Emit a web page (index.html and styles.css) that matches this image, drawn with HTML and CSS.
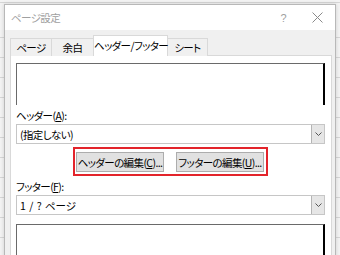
FILE: index.html
```html
<!DOCTYPE html>
<html lang="ja">
<head>
    <meta charset="UTF-8">
    <title>ページ設定</title>
    <link rel="stylesheet" href="styles.css">
</head>
<body>

    <div class="dialog">
        <div class="titlebar">
            <span class="title">ページ設定</span>
            <span class="help">?</span>
            <span class="close">
                <svg width="11" height="11" viewBox="0 0 11 11">
                    <path d="M0.5 0.5 L10.5 10.5 M10.5 0.5 L0.5 10.5" stroke="#8a8a8a" stroke-width="1" fill="none"/>
                </svg>
            </span>
        </div>
        <div class="content">
            <div class="tabs">
                <div class="tab">ページ</div>
                <div class="tab">余白</div>
                <div class="tab active">ヘッダー/フッター</div>
                <div class="tab">シート</div>
            </div>
            <div class="panel">
                <div class="preview"></div>
                <div class="field-label">ヘッダー(<u>A</u>):</div>
                <div class="select">
                    <span class="value">(指定しない)</span>
                    <span class="arrow">
                        <svg width="7" height="4" viewBox="0 0 7 4">
                            <path d="M0.5 0.5 L3.5 3.5 L6.5 0.5" stroke="#555" stroke-width="1" fill="none"/>
                        </svg>
                    </span>
                </div>
                <div class="edit-box">
                    <button>ヘッダーの編集(<u>C</u>)...</button>
                    <button>フッターの編集(<u>U</u>)...</button>
                </div>
                <div class="field-label">フッター(<u>F</u>):</div>
                <div class="select">
                    <span class="value spaced">1 / ? ページ</span>
                    <span class="arrow">
                        <svg width="7" height="4" viewBox="0 0 7 4">
                            <path d="M0.5 0.5 L3.5 3.5 L6.5 0.5" stroke="#555" stroke-width="1" fill="none"/>
                        </svg>
                    </span>
                </div>
                <div class="preview lower"></div>
            </div>
        </div>
    </div>

</body>
</html>
```

FILE: styles.css
```css
body {
    margin: 0;
    height: 255px;
    overflow: hidden;
    font-family: "Noto Sans CJK JP", "Noto Sans", sans-serif;
    font-feature-settings: "palt";
    font-size: 10.5px;
    letter-spacing: -0.6px;
    white-space: nowrap;
    color: #000;
    background-color: #f3f3f3;
    background-image: repeating-linear-gradient(to bottom, transparent 0, transparent 19px, #d6d6d6 19px, #d6d6d6 20px);
    background-position: 0 18px;
}
.dialog {
    margin: 4px 0 0 4px;
    width: 330px;
    height: 260px;
    border: 1px solid #b8b8b8;
    background: #f0f0f0;
    box-shadow: 0 0 4px rgba(0, 0, 0, 0.15);
}
.titlebar {
    display: flex;
    align-items: center;
    height: 25px;
    padding-left: 6px;
    background: #fff;
}
.title {
    color: #a0a0a0;
    flex: 1;
}
.help {
    color: #a0a0a0;
    font-family: "Liberation Sans", sans-serif;
    font-size: 11px;
    margin-right: 26px;
}
.close {
    display: flex;
    margin-right: 12px;
}
.content {
    padding: 6px 3px 0 5px;
}
.tabs {
    display: flex;
    align-items: flex-end;
    height: 20px;
    margin-bottom: -1px;
}
.tab {
    height: 18px;
    box-sizing: border-box;
    border: 1px solid #d9d9d9;
    border-bottom: none;
    margin-right: -1px;
    line-height: 17px;
    text-align: center;
    background: #f0f0f0;
}
.tab:nth-child(1) { width: 42px; }
.tab:nth-child(2) { width: 43px; }
.tab:nth-child(3) { width: 75px; }
.tab:nth-child(4) { width: 41px; }
.tab.active {
    height: 21px;
    line-height: 19px;
    background: #fff;
    position: relative;
    z-index: 1;
}
.panel {
    width: 322px;
    height: 210px;
    box-sizing: border-box;
    border: 1px solid #d9d9d9;
    background: #fff;
    padding: 7px 6px 0 5px;
    display: flex;
    flex-direction: column;
}
.preview {
    height: 42px;
    box-sizing: border-box;
    border-top: 1px solid #6a6a6a;
    border-left: 1px solid #6a6a6a;
    border-right: 2px solid #000;
    flex-shrink: 0;
}
.preview.lower {
    margin-top: 9px;
    height: 40px;
}
.field-label {
    height: 19px;
    line-height: 21px;
}
.field-label u,
button u {
    text-underline-offset: 1px;
}
.select {
    display: flex;
    align-items: center;
    height: 20px;
    box-sizing: border-box;
    border: 1px solid #c6c6c6;
    padding-left: 3px;
    flex-shrink: 0;
}
.value {
    flex: 1;
}
.value.spaced {
    letter-spacing: 0;
    word-spacing: 1px;
}
.arrow {
    width: 13px;
    height: 18px;
    box-sizing: border-box;
    border-left: 1px solid #b4b4b4;
    background: #e6e6e6;
    display: flex;
    align-items: center;
    justify-content: center;
}
.edit-box {
    align-self: center;
    display: flex;
    gap: 12px;
    margin-top: 3px;
    height: 33px;
    box-sizing: border-box;
    padding: 3px 2px 0 1px;
    border: 2px solid #e3242b;
}
button {
    width: 88px;
    height: 20px;
    padding: 0;
    font-family: inherit;
    font-size: 10.5px;
    letter-spacing: -0.6px;
    font-feature-settings: "palt";
    white-space: nowrap;
    color: #000;
    background: #e1e1e1;
    border: 1px solid #adadad;
}
```
